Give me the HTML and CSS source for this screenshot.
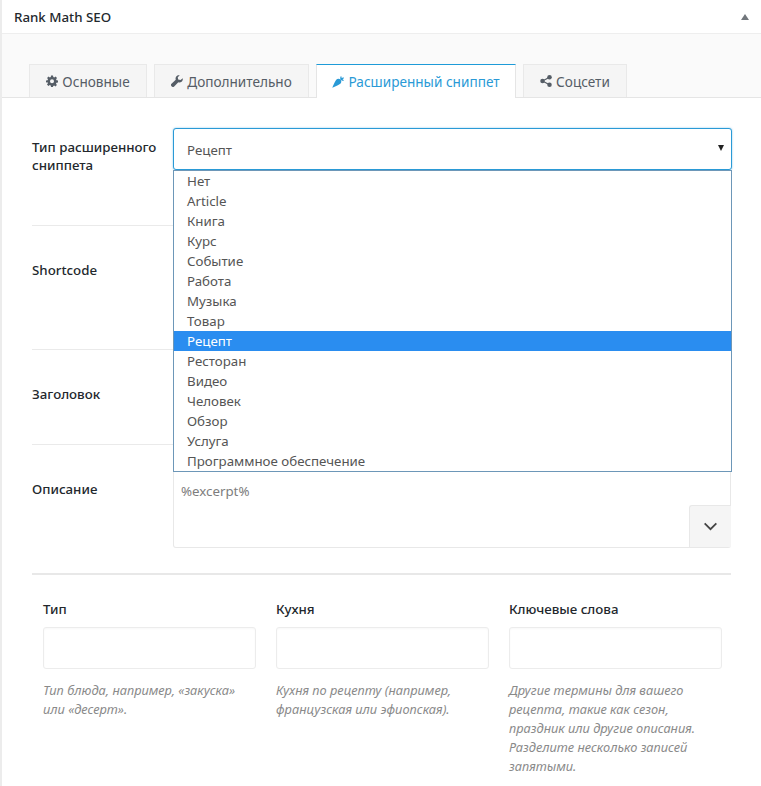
FILE: index.html
```html
<!DOCTYPE html>
<html lang="ru">
<head>
    <meta charset="UTF-8">
    <title>Rank Math SEO</title>
    <link rel="stylesheet" href="styles.css">
</head>
<body>
    <div class="metabox">
        <div class="metabox-head">
            <span>Rank Math SEO</span>
            <span class="collapse-arrow"></span>
        </div>
        <div class="tabs">
            <a class="tab">
                <svg class="tab-icon" viewBox="0 0 24 24"><path d="M10 1h4l.6 3.2 1.9.8 2.7-1.8 2.8 2.8-1.8 2.7.8 1.9L24 11v4l-3.2.6-.8 1.9 1.8 2.7-2.8 2.8-2.7-1.8-1.9.8L14 24h-4l-.6-3.2-1.9-.8-2.7 1.8L2 19l1.8-2.7-.8-1.9L0 15v-4l3.200-.6.8-1.900L2.200 5.800 5 3l2.700 1.800 1.900-.8zM12 8.500a4 4 0 1 0 0 8 4 4 0 0 0 0-8z" fill-rule="evenodd"/></svg>
                Основные
            </a>
            <a class="tab">
                <svg class="tab-icon" viewBox="0 0 24 24"><path d="M23.500 6.500c.5 3-.4 5.400-2.400 7-1.900 1.500-4.300 1.800-6.500 1L6.400 23a3.300 3.300 0 0 1-4.700 0l-.7-.7a3.300 3.300 0 0 1 0-4.700l8.500-8.200c-.8-2.200-.5-4.600 1-6.500C12.100.9 14.600 0 17.500.500l-4 4 .8 4.700 4.700.8z"/></svg>
                Дополнительно
            </a>
            <a class="tab active">
                <svg class="tab-icon" viewBox="0 0 24 24"><path d="M17 7c-3-2.500-6.500-2-8.500.5C6 11 3 17 .5 23.500 7 21 13 18 16.500 15.500c2.500-2 3-5.500.5-8.500zM17 7c-1-3-.5-5.500 1-7 .8 1 1.300 2.300 1.300 3.800C20.500 2.800 22 2.500 24 3c-.5 2-1.500 3.300-3 4 1.200.3 2.200 1 3 2-2 1.300-4.500 1-7-2z"/></svg>
                Расширенный сниппет
            </a>
            <a class="tab">
                <svg class="tab-icon" viewBox="0 0 24 24"><circle cx="5" cy="12" r="4.500"/><circle cx="19" cy="4.500" r="4.500"/><circle cx="19" cy="19.500" r="4.500"/><path d="M5 12L19 4.500M5 12l14 7.500" stroke="currentColor" stroke-width="2.500"/></svg>
                Соцсети
            </a>
        </div>
        <div class="panel">
            <div class="row row-type">
                <label class="row-label">Тип расширенного сниппета</label>
                <div class="row-field">
                    <div class="select">
                        Рецепт
                        <span class="select-arrow"></span>
                    </div>
                    <ul class="select-list">
                        <li>Нет</li>
                        <li>Article</li>
                        <li>Книга</li>
                        <li>Курс</li>
                        <li>Событие</li>
                        <li>Работа</li>
                        <li>Музыка</li>
                        <li>Товар</li>
                        <li class="selected">Рецепт</li>
                        <li>Ресторан</li>
                        <li>Видео</li>
                        <li>Человек</li>
                        <li>Обзор</li>
                        <li>Услуга</li>
                        <li>Программное обеспечение</li>
                    </ul>
                </div>
            </div>
            <div class="row row-shortcode">
                <label class="row-label">Shortcode</label>
            </div>
            <div class="row row-title">
                <label class="row-label">Заголовок</label>
            </div>
            <div class="row row-desc">
                <label class="row-label">Описание</label>
                <div class="row-field">
                    <div class="textarea">
                        %excerpt%
                        <span class="var-btn">
                            <svg viewBox="0 0 16 10" width="15" height="9"><path d="M1.500 1.500L8 8l6.500-6.500" fill="none" stroke="#444" stroke-width="2"/></svg>
                        </span>
                    </div>
                </div>
            </div>
            <div class="columns">
                <div class="col">
                    <label>Тип</label>
                    <div class="input"></div>
                    <p class="help">Тип блюда, например, «закуска» или «десерт».</p>
                </div>
                <div class="col">
                    <label>Кухня</label>
                    <div class="input"></div>
                    <p class="help">Кухня по рецепту (например, французская или эфиопская).</p>
                </div>
                <div class="col">
                    <label>Ключевые слова</label>
                    <div class="input"></div>
                    <p class="help">Другие термины для вашего рецепта, такие как сезон, праздник или другие описания. Разделите несколько записей запятыми.</p>
                </div>
            </div>
        </div>
    </div>
</body>
</html>
```

FILE: styles.css
```css
html, body {
    margin: 0;
    height: 786px;
    overflow: hidden;
}
body {
    font-family: "Noto Sans", "Open Sans", sans-serif;
    font-size: 13.3px;
    color: #32373c;
    background: #fff;
}
.metabox {
    border-left: 2px solid #ececec;
    height: 786px;
}
.metabox-head {
    display: flex;
    justify-content: space-between;
    align-items: center;
    height: 33px;
    padding: 0 12px;
    border-bottom: 1px solid #eeeeee;
    font-weight: 500;
    color: #23282d;
}
.collapse-arrow {
    width: 0;
    height: 0;
    border-left: 4px solid transparent;
    border-right: 4px solid transparent;
    border-bottom: 6px solid #72777c;
}
.tabs {
    display: flex;
    gap: 7px;
    height: 63px;
    padding: 0 0 0 27px;
    align-items: flex-end;
    background: #fafafa;
    border-bottom: 1px solid #e5e5e5;
}
.tab {
    display: flex;
    align-items: center;
    justify-content: center;
    gap: 4px;
    height: 33px;
    box-sizing: border-box;
    background: #f5f5f5;
    border: 1px solid #e9e9e9;
    border-bottom: none;
    font-size: 13.6px;
    color: #555d66;
}
.tab:nth-child(1) { width: 118px; }
.tab:nth-child(2) { width: 155px; }
.tab:nth-child(3) { width: 200px; }
.tab:nth-child(4) { width: 104px; }
.tab.active {
    height: 34px;
    margin-bottom: -1px;
    background: #fff;
    border-color: #e5e5e5;
    border-top: 1px solid #1e9bd8;
    color: #2a9ad6;
    z-index: 1;
}
.tab-icon {
    width: 12px;
    height: 12px;
    fill: currentColor;
}
.panel {
    padding: 0 30px;
}
.row {
    display: flex;
    border-bottom: 1px solid #eaeaea;
    box-sizing: border-box;
}
.row-label {
    width: 141px;
    flex: none;
    line-height: 18px;
    font-weight: 500;
    color: #23282d;
}
.row-field {
    flex: 1;
    position: relative;
}
.row-type {
    height: 128px;
    padding-top: 30px;
}
.row-type .row-label {
    padding-top: 10px;
    padding-right: 10px;
    box-sizing: border-box;
}
.row-shortcode {
    height: 124px;
    padding-top: 35px;
}
.row-title {
    height: 95px;
    padding-top: 35px;
}
.row-desc {
    height: 130px;
    padding-top: 35px;
    border-bottom: 2px solid #e8e8e8;
}
.select {
    display: flex;
    align-items: center;
    height: 42px;
    box-sizing: border-box;
    margin-right: -1px;
    padding: 2px 13px 0;
    background: #fff;
    border: 1px solid #2a9ad6;
    border-radius: 3px;
    box-shadow: 0 0 2px rgba(42, 154, 214, 0.6);
    color: #555;
    position: relative;
}
.select-arrow {
    position: absolute;
    right: 7px;
    top: 16px;
    width: 0;
    height: 0;
    border-left: 3px solid transparent;
    border-right: 3px solid transparent;
    border-top: 6px solid #222;
}
.select-list {
    position: absolute;
    top: 42px;
    left: 0;
    right: -1px;
    z-index: 5;
    margin: 0;
    padding: 0;
    list-style: none;
    background: #fff;
    border: 1px solid #6d97b8;
    color: #555;
}
.select-list li {
    height: 20px;
    line-height: 20px;
    padding-left: 13px;
}
.select-list li.selected {
    background: #2a8df0;
    color: #fff;
}
.textarea {
    position: relative;
    height: 78px;
    box-sizing: border-box;
    margin-top: -10px;
    padding: 12px 7px;
    border: 1px solid #e8e8e8;
    border-top: none;
    border-radius: 3px;
    color: #7d7d7d;
    line-height: 18px;
}
.var-btn {
    position: absolute;
    right: -1px;
    bottom: 0;
    display: flex;
    align-items: center;
    justify-content: center;
    width: 41px;
    height: 41px;
    background: #f5f5f5;
    border-top: 1px solid #e8e8e8;
    border-left: 1px solid #e8e8e8;
    border-top-left-radius: 3px;
}
.columns {
    display: flex;
    gap: 20px;
    padding: 25px 9px 0 11px;
}
.col {
    flex: 1;
    min-width: 0;
}
.col label {
    display: block;
    height: 18px;
    line-height: 18px;
    font-weight: 500;
    color: #23282d;
}
.input {
    height: 42px;
    box-sizing: border-box;
    margin-top: 9px;
    border: 1px solid #ececec;
    border-radius: 3px;
    box-shadow: inset 0 1px 2px rgba(0, 0, 0, 0.03);
}
.help {
    margin: 12px 0 0;
    font-size: 12.8px;
    line-height: 19px;
    font-style: italic;
    color: #8a8a8a;
}
```
